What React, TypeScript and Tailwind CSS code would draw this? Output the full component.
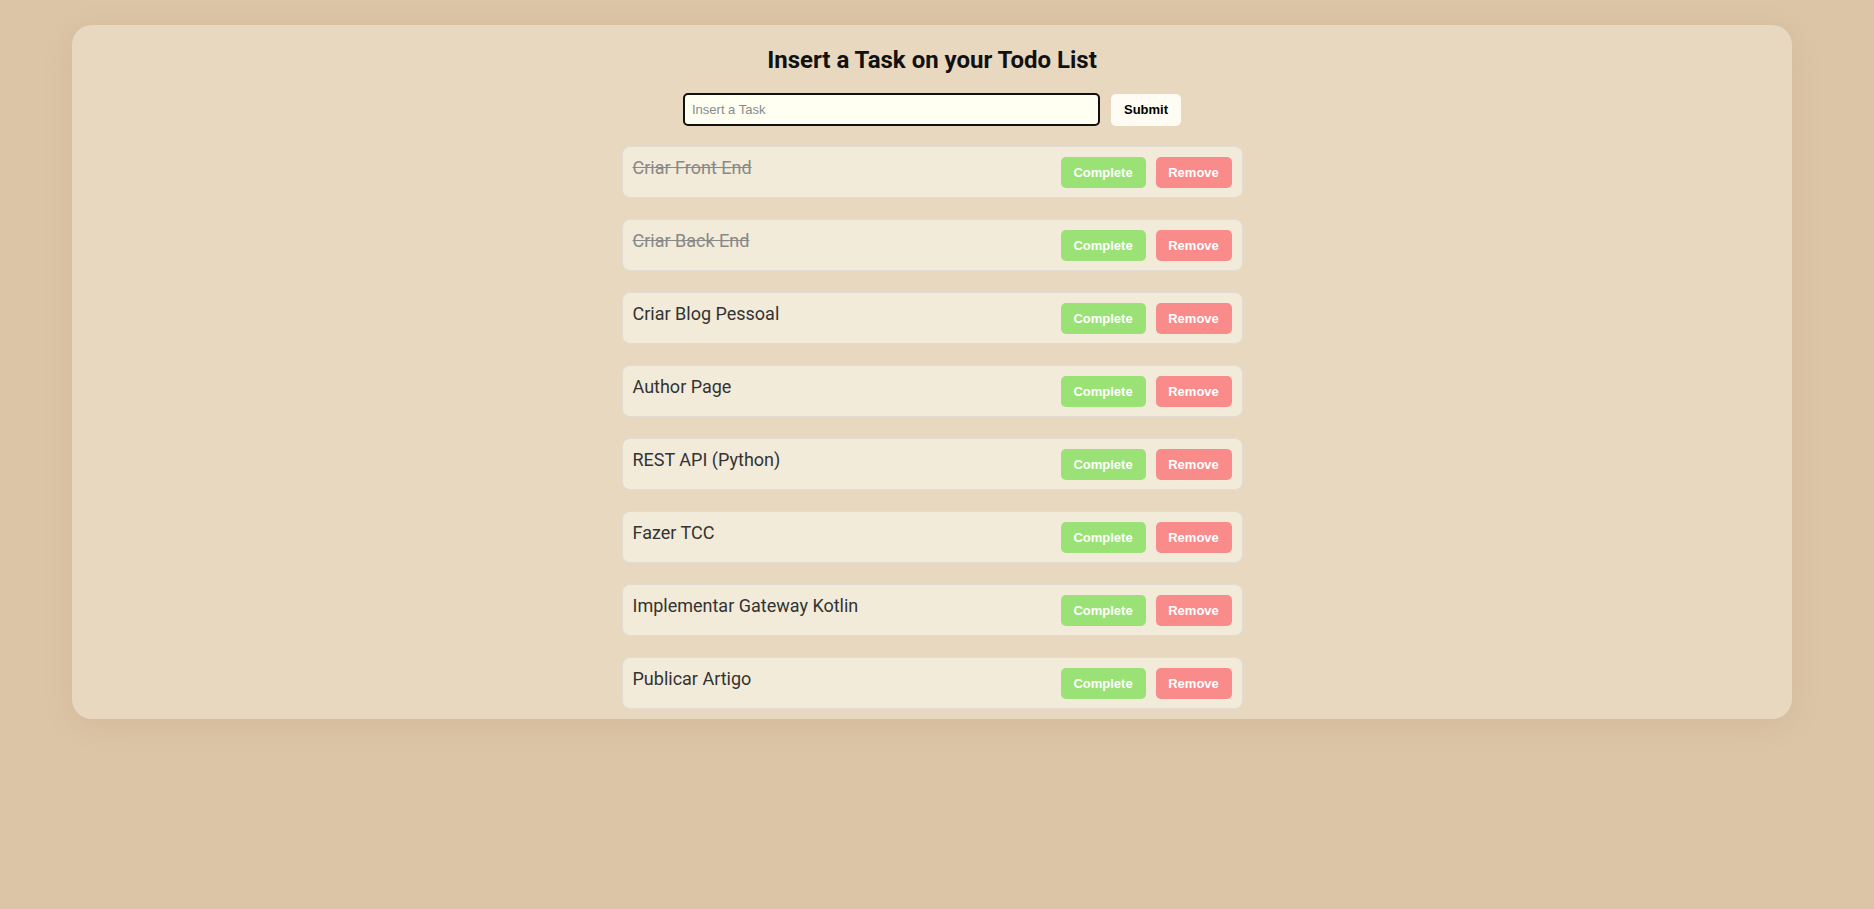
const tasks = [
  { text: "Criar Front End", done: true },
  { text: "Criar Back End", done: true },
  { text: "Criar Blog Pessoal", done: false },
  { text: "Author Page", done: false },
  { text: "REST API (Python)", done: false },
  { text: "Fazer TCC", done: false },
  { text: "Implementar Gateway Kotlin", done: false },
  { text: "Publicar Artigo", done: false },
];

export default function App() {
  return (
    <div className="min-h-[909px] bg-[#dcc5a7] pt-[25px] pl-[72px]">
      <div className="w-[1720px] rounded-[20px] bg-[#e8d8bf] pt-[21px] pb-[10px] shadow-[0_6px_30px_rgba(150,110,60,0.12)] flex flex-col items-center">
        <h1 className="text-[24px] leading-[28px] font-bold text-[#111] font-['Roboto',sans-serif]">
          Insert a Task on your Todo List
        </h1>
        <form className="mt-[19px] flex items-center gap-[11px]" onSubmit={(e) => e.preventDefault()}>
          <input
            placeholder="Insert a Task"
            className="w-[417px] h-[33px] rounded-[5px] border-2 border-[#111] bg-[#fffff2] px-[7px] text-[13px] font-['Liberation_Sans',sans-serif] placeholder:text-[#8a8a8a] outline-none"
          />
          <button className="w-[70px] h-[32px] rounded-[5px] bg-[#fffdf3] text-[13px] font-bold text-black font-['Liberation_Sans',sans-serif]">
            Submit
          </button>
        </form>
        <div className="mt-[20px] flex flex-col gap-[21px]">
          {tasks.map((t) => (
            <div
              key={t.text}
              className="w-[621px] flex justify-between items-start p-[10px] pb-[9px] rounded-[8px] border border-[#e2ddd4] bg-[#f2ebda]"
            >
              <span
                className={`text-[18px] leading-[21px] font-['Roboto',sans-serif] ${
                  t.done ? "line-through text-[#888]" : "text-[#333]"
                }`}
              >
                {t.text}
              </span>
              <div className="flex gap-[10px]">
                <button className="w-[85px] h-[31px] rounded-[5px] bg-[#9ae275] text-white text-[13px] font-bold font-['Liberation_Sans',sans-serif]">
                  Complete
                </button>
                <button className="w-[76px] h-[31px] rounded-[5px] bg-[#f98b8a] text-white text-[13px] font-bold font-['Liberation_Sans',sans-serif]">
                  Remove
                </button>
              </div>
            </div>
          ))}
        </div>
      </div>
    </div>
  );
}
